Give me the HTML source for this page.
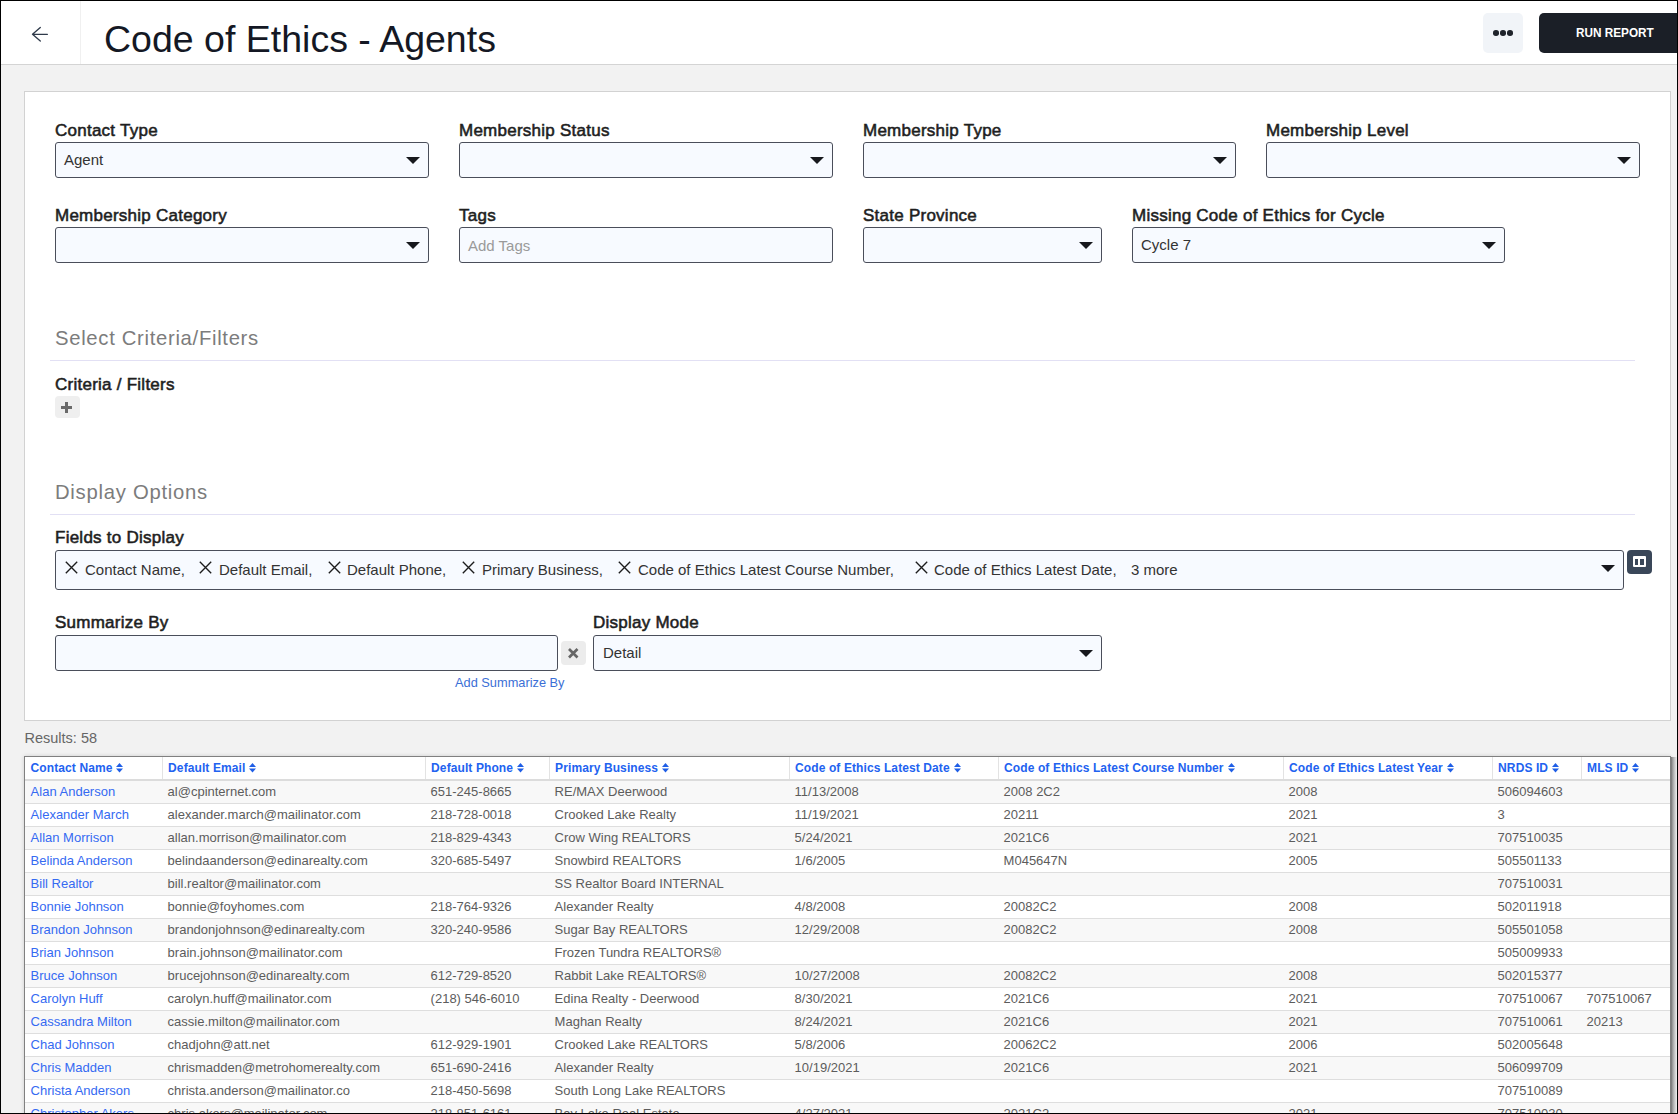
<!DOCTYPE html><html><head><meta charset="utf-8"><style>
*{margin:0;padding:0;box-sizing:border-box}
html,body{width:1678px;height:1114px;overflow:hidden}
body{position:relative;background:#f2f2f2;font-family:"Liberation Sans",sans-serif}
.t{position:absolute;white-space:nowrap}
.abs{position:absolute}
#hdr{position:absolute;left:0;top:0;width:1678px;height:65px;background:#fff;border-bottom:1px solid #d4d4d4}
#backdiv{position:absolute;left:80px;top:0;width:1px;height:64px;background:#f0f0f0}
#dots{position:absolute;left:1483px;top:13px;width:40px;height:40px;background:#f1f4f8;border-radius:5px}
#dots span{position:absolute;top:17.2px;width:5.6px;height:5.6px;border-radius:50%;background:#1f232b}
#dots span:nth-child(1){left:10px}#dots span:nth-child(2){left:17px}#dots span:nth-child(3){left:24px}
#run{position:absolute;left:1539px;top:13px;width:160px;height:40px;background:#1b1f27;border-radius:5px;color:#fff;
 font-weight:700;font-size:13px;line-height:40px;padding-left:37px}
#run span{display:inline-block;transform:scaleX(0.905);transform-origin:0 50%}
#card{position:absolute;left:24px;top:91px;width:1647px;height:630px;background:#fff;border:1px solid #d2d2d2}
.box{position:absolute;background:#f7faff;border:1px solid #4a4e5a;border-radius:3px}
.tri{position:absolute;width:0;height:0;border-left:7px solid transparent;border-right:7px solid transparent;border-top:7px solid #17181d}
.hr{position:absolute;left:50px;width:1585px;height:1px;background:#e2e0f4}
#plus{position:absolute;left:55px;top:396px;width:25px;height:22px;background:#efefef;border-radius:4px}
#plus:before{content:"";position:absolute;left:6px;top:10.2px;width:11px;height:2.6px;background:#6a6a6a}
#plus:after{content:"";position:absolute;left:10.1px;top:5.9px;width:2.7px;height:10.8px;background:#6a6a6a}
#colbtn{position:absolute;left:1627px;top:550px;width:25px;height:24px;background:#3a4759;border-radius:4px}
#colbtn div{position:absolute;left:6px;top:6px;width:13px;height:11px;border:2px solid #fff;border-radius:1px}
#colbtn div:after{content:"";position:absolute;left:3.5px;top:0;width:2px;height:7px;background:#fff}
#xbtn{position:absolute;left:561px;top:641px;width:25px;height:24px;background:#ececec;border-radius:4px;color:#555;font-size:12px;line-height:24px;text-align:center}
#tbl{position:absolute;left:24px;top:756px;width:1647px;height:400px;background:#fff;border:1px solid #808080;border-right-width:1px;box-shadow:0 0 4px rgba(0,0,0,.15)}
#tshadow{position:absolute;left:1671px;top:757px;width:6px;height:400px;background:linear-gradient(to right,#7c7c7c,#a8a8a8 30%,#d0d0d0 70%,#efefef)}
table{border-collapse:collapse;table-layout:fixed;width:1645px}
th{height:23px;text-align:left;font-size:12px;font-weight:700;letter-spacing:0.1px;color:#2262f0;padding:0 0 0 5.6px;border-right:1px solid #e3e3e3;border-bottom:2px solid #dcdcdc;white-space:nowrap;line-height:22px;vertical-align:top}
th:last-child{border-right:none}
.sort{display:inline-block;vertical-align:top;margin:6px 0 0 4px}
td{height:23px;font-size:13px;color:#5c5c5c;padding:0 0 0 5.6px;border-bottom:1px solid #dedede;white-space:nowrap;overflow:hidden;line-height:22px;vertical-align:top}
td.l{color:#356af2}
tbody tr:nth-child(odd) td{background:#f8f8f8}
#frame{position:absolute;left:0;top:0;width:1678px;height:1114px;border:1px solid #000;pointer-events:none}
</style></head><body><div id="hdr"></div>
<div id="backdiv"></div>
<svg class="abs" style="left:30px;top:25px" width="20" height="20" viewBox="30 25 20 20"><path d="M40.3 27.5 L32.5 34.3 L40.3 41.0 M32.8 34.3 H47.4" fill="none" stroke="#2f3a4a" stroke-width="1.3" stroke-linecap="round" stroke-linejoin="round"/></svg>
<div class="t" style="left:104px;top:20.74px;font-size:37.5px;line-height:37.5px;color:#141824;font-weight:400;">Code of Ethics - Agents</div>
<div id="dots"><span></span><span></span><span></span></div>
<div id="run"><span>RUN REPORT</span></div>
<div id="card"></div>
<div class="t" style="left:55px;top:121.60px;font-size:17px;line-height:17px;color:#1e1e1e;font-weight:400;-webkit-text-stroke:0.55px #1e1e1e;letter-spacing:0.25px;">Contact Type</div>
<div class="t" style="left:459px;top:121.60px;font-size:17px;line-height:17px;color:#1e1e1e;font-weight:400;-webkit-text-stroke:0.55px #1e1e1e;letter-spacing:0.25px;">Membership Status</div>
<div class="t" style="left:863px;top:121.60px;font-size:17px;line-height:17px;color:#1e1e1e;font-weight:400;-webkit-text-stroke:0.55px #1e1e1e;letter-spacing:0.25px;">Membership Type</div>
<div class="t" style="left:1266px;top:121.60px;font-size:17px;line-height:17px;color:#1e1e1e;font-weight:400;-webkit-text-stroke:0.55px #1e1e1e;letter-spacing:0.25px;">Membership Level</div>
<div class="box" style="left:55px;top:142px;width:374px;height:36px"></div><div class="tri" style="left:406px;top:157px"></div>
<div class="box" style="left:459px;top:142px;width:374px;height:36px"></div><div class="tri" style="left:810px;top:157px"></div>
<div class="box" style="left:863px;top:142px;width:373px;height:36px"></div><div class="tri" style="left:1213px;top:157px"></div>
<div class="box" style="left:1266px;top:142px;width:374px;height:36px"></div><div class="tri" style="left:1617px;top:157px"></div>
<div class="t" style="left:64px;top:152.29px;font-size:15px;line-height:15px;color:#333;font-weight:400;">Agent</div>
<div class="t" style="left:55px;top:206.60px;font-size:17px;line-height:17px;color:#1e1e1e;font-weight:400;-webkit-text-stroke:0.55px #1e1e1e;letter-spacing:0.25px;">Membership Category</div>
<div class="t" style="left:459px;top:206.60px;font-size:17px;line-height:17px;color:#1e1e1e;font-weight:400;-webkit-text-stroke:0.55px #1e1e1e;letter-spacing:0.25px;">Tags</div>
<div class="t" style="left:863px;top:206.60px;font-size:17px;line-height:17px;color:#1e1e1e;font-weight:400;-webkit-text-stroke:0.55px #1e1e1e;letter-spacing:0.25px;">State Province</div>
<div class="t" style="left:1132px;top:206.60px;font-size:17px;line-height:17px;color:#1e1e1e;font-weight:400;-webkit-text-stroke:0.55px #1e1e1e;letter-spacing:0.25px;">Missing Code of Ethics for Cycle</div>
<div class="box" style="left:55px;top:227px;width:374px;height:36px"></div><div class="tri" style="left:406px;top:242px"></div>
<div class="box" style="left:459px;top:227px;width:374px;height:36px"></div>
<div class="box" style="left:863px;top:227px;width:239px;height:36px"></div><div class="tri" style="left:1079px;top:242px"></div>
<div class="box" style="left:1132px;top:227px;width:373px;height:36px"></div><div class="tri" style="left:1482px;top:242px"></div>
<div class="t" style="left:468px;top:237.79px;font-size:15px;line-height:15px;color:#9a9a9a;font-weight:400;">Add Tags</div>
<div class="t" style="left:1141px;top:237.29px;font-size:15px;line-height:15px;color:#333;font-weight:400;">Cycle 7</div>
<div class="t" style="left:55px;top:327.81px;font-size:20.3px;line-height:20.3px;color:#7c7c7c;font-weight:400;letter-spacing:0.68px;">Select Criteria/Filters</div>
<div class="hr" style="top:360px"></div>
<div class="t" style="left:55px;top:375.60px;font-size:17px;line-height:17px;color:#1e1e1e;font-weight:400;-webkit-text-stroke:0.55px #1e1e1e;letter-spacing:0.25px;">Criteria / Filters</div>
<div id="plus"></div>
<div class="t" style="left:55px;top:481.81px;font-size:20.3px;line-height:20.3px;color:#7c7c7c;font-weight:400;letter-spacing:0.72px;">Display Options</div>
<div class="hr" style="top:514px"></div>
<div class="t" style="left:55px;top:529.30px;font-size:17px;line-height:17px;color:#1e1e1e;font-weight:400;-webkit-text-stroke:0.55px #1e1e1e;letter-spacing:0.25px;">Fields to Display</div>
<div class="box" style="left:55px;top:550px;width:1569px;height:40px"></div><div class="tri" style="left:1601px;top:565px"></div>
<svg class="abs" style="left:65px;top:561px" width="13" height="13" viewBox="0 0 13 13"><path d="M0.8 0.8 L12.2 12.2 M12.2 0.8 L0.8 12.2" stroke="#1c1c1c" stroke-width="1.35"/></svg>
<div class="t" style="left:85px;top:562.29px;font-size:15px;line-height:15px;color:#333;font-weight:400;">Contact Name,</div>
<svg class="abs" style="left:199px;top:561px" width="13" height="13" viewBox="0 0 13 13"><path d="M0.8 0.8 L12.2 12.2 M12.2 0.8 L0.8 12.2" stroke="#1c1c1c" stroke-width="1.35"/></svg>
<div class="t" style="left:219px;top:562.29px;font-size:15px;line-height:15px;color:#333;font-weight:400;">Default Email,</div>
<svg class="abs" style="left:328px;top:561px" width="13" height="13" viewBox="0 0 13 13"><path d="M0.8 0.8 L12.2 12.2 M12.2 0.8 L0.8 12.2" stroke="#1c1c1c" stroke-width="1.35"/></svg>
<div class="t" style="left:347px;top:562.29px;font-size:15px;line-height:15px;color:#333;font-weight:400;">Default Phone,</div>
<svg class="abs" style="left:462px;top:561px" width="13" height="13" viewBox="0 0 13 13"><path d="M0.8 0.8 L12.2 12.2 M12.2 0.8 L0.8 12.2" stroke="#1c1c1c" stroke-width="1.35"/></svg>
<div class="t" style="left:482px;top:562.29px;font-size:15px;line-height:15px;color:#333;font-weight:400;">Primary Business,</div>
<svg class="abs" style="left:618px;top:561px" width="13" height="13" viewBox="0 0 13 13"><path d="M0.8 0.8 L12.2 12.2 M12.2 0.8 L0.8 12.2" stroke="#1c1c1c" stroke-width="1.35"/></svg>
<div class="t" style="left:638px;top:562.29px;font-size:15px;line-height:15px;color:#333;font-weight:400;">Code of Ethics Latest Course Number,</div>
<svg class="abs" style="left:915px;top:561px" width="13" height="13" viewBox="0 0 13 13"><path d="M0.8 0.8 L12.2 12.2 M12.2 0.8 L0.8 12.2" stroke="#1c1c1c" stroke-width="1.35"/></svg>
<div class="t" style="left:934px;top:562.29px;font-size:15px;line-height:15px;color:#333;font-weight:400;">Code of Ethics Latest Date,</div>
<div class="t" style="left:1131px;top:562.29px;font-size:15px;line-height:15px;color:#333;font-weight:400;">3 more</div>
<div id="colbtn"></div><svg class="abs" style="left:1633px;top:556px" width="13" height="11" viewBox="0 0 13 11"><rect x="0" y="0" width="13" height="11" rx="1" fill="#fff"/><rect x="2" y="3" width="3" height="6" fill="#3a4759"/><rect x="7" y="3" width="4" height="6" fill="#3a4759"/></svg>
<div class="t" style="left:55px;top:614.30px;font-size:17px;line-height:17px;color:#1e1e1e;font-weight:400;-webkit-text-stroke:0.55px #1e1e1e;letter-spacing:0.25px;">Summarize By</div>
<div class="box" style="left:55px;top:635px;width:503px;height:36px"></div>
<div id="xbtn"></div><svg class="abs" style="left:566px;top:646px" width="14" height="14" viewBox="0 0 14 14"><path d="M3 3 L11.5 11.5 M11.5 3 L3 11.5" stroke="#666" stroke-width="2.7"/></svg>
<div class="t" style="left:455px;top:677.16px;font-size:12.8px;line-height:12.8px;color:#3b6fd6;font-weight:400;">Add Summarize By</div>
<div class="t" style="left:593px;top:614.30px;font-size:17px;line-height:17px;color:#1e1e1e;font-weight:400;-webkit-text-stroke:0.55px #1e1e1e;letter-spacing:0.25px;">Display Mode</div>
<div class="box" style="left:593px;top:635px;width:509px;height:36px"></div><div class="tri" style="left:1079px;top:650px"></div>
<div class="t" style="left:603px;top:645.29px;font-size:15px;line-height:15px;color:#333;font-weight:400;">Detail</div>
<div class="t" style="left:24.5px;top:731.22px;font-size:14.5px;line-height:14.5px;color:#666;font-weight:400;">Results: 58</div>
<div id="tshadow"></div><div id="tbl"><table><colgroup><col style="width:137px"><col style="width:263px"><col style="width:124px"><col style="width:240px"><col style="width:209px"><col style="width:285px"><col style="width:209px"><col style="width:89px"><col style="width:89px"></colgroup><thead><tr><th>Contact Name<svg class="sort" width="7" height="10" viewBox="0 0 7 10"><path d="M3.5 0 L7 4 H0 Z M0 5.4 H7 L3.5 9.4 Z" fill="#1f5ee6"/></svg></th><th>Default Email<svg class="sort" width="7" height="10" viewBox="0 0 7 10"><path d="M3.5 0 L7 4 H0 Z M0 5.4 H7 L3.5 9.4 Z" fill="#1f5ee6"/></svg></th><th>Default Phone<svg class="sort" width="7" height="10" viewBox="0 0 7 10"><path d="M3.5 0 L7 4 H0 Z M0 5.4 H7 L3.5 9.4 Z" fill="#1f5ee6"/></svg></th><th>Primary Business<svg class="sort" width="7" height="10" viewBox="0 0 7 10"><path d="M3.5 0 L7 4 H0 Z M0 5.4 H7 L3.5 9.4 Z" fill="#1f5ee6"/></svg></th><th>Code of Ethics Latest Date<svg class="sort" width="7" height="10" viewBox="0 0 7 10"><path d="M3.5 0 L7 4 H0 Z M0 5.4 H7 L3.5 9.4 Z" fill="#1f5ee6"/></svg></th><th>Code of Ethics Latest Course Number<svg class="sort" width="7" height="10" viewBox="0 0 7 10"><path d="M3.5 0 L7 4 H0 Z M0 5.4 H7 L3.5 9.4 Z" fill="#1f5ee6"/></svg></th><th>Code of Ethics Latest Year<svg class="sort" width="7" height="10" viewBox="0 0 7 10"><path d="M3.5 0 L7 4 H0 Z M0 5.4 H7 L3.5 9.4 Z" fill="#1f5ee6"/></svg></th><th>NRDS ID<svg class="sort" width="7" height="10" viewBox="0 0 7 10"><path d="M3.5 0 L7 4 H0 Z M0 5.4 H7 L3.5 9.4 Z" fill="#1f5ee6"/></svg></th><th>MLS ID<svg class="sort" width="7" height="10" viewBox="0 0 7 10"><path d="M3.5 0 L7 4 H0 Z M0 5.4 H7 L3.5 9.4 Z" fill="#1f5ee6"/></svg></th></tr></thead><tbody><tr><td class=l>Alan Anderson</td><td>al@cpinternet.com</td><td>651-245-8665</td><td>RE/MAX Deerwood</td><td>11/13/2008</td><td>2008 2C2</td><td>2008</td><td>506094603</td><td></td></tr><tr><td class=l>Alexander March</td><td>alexander.march@mailinator.com</td><td>218-728-0018</td><td>Crooked Lake Realty</td><td>11/19/2021</td><td>20211</td><td>2021</td><td>3</td><td></td></tr><tr><td class=l>Allan Morrison</td><td>allan.morrison@mailinator.com</td><td>218-829-4343</td><td>Crow Wing REALTORS</td><td>5/24/2021</td><td>2021C6</td><td>2021</td><td>707510035</td><td></td></tr><tr><td class=l>Belinda Anderson</td><td>belindaanderson@edinarealty.com</td><td>320-685-5497</td><td>Snowbird REALTORS</td><td>1/6/2005</td><td>M045647N</td><td>2005</td><td>505501133</td><td></td></tr><tr><td class=l>Bill Realtor</td><td>bill.realtor@mailinator.com</td><td></td><td>SS Realtor Board INTERNAL</td><td></td><td></td><td></td><td>707510031</td><td></td></tr><tr><td class=l>Bonnie Johnson</td><td>bonnie@foyhomes.com</td><td>218-764-9326</td><td>Alexander Realty</td><td>4/8/2008</td><td>20082C2</td><td>2008</td><td>502011918</td><td></td></tr><tr><td class=l>Brandon Johnson</td><td>brandonjohnson@edinarealty.com</td><td>320-240-9586</td><td>Sugar Bay REALTORS</td><td>12/29/2008</td><td>20082C2</td><td>2008</td><td>505501058</td><td></td></tr><tr><td class=l>Brian Johnson</td><td>brain.johnson@mailinator.com</td><td></td><td>Frozen Tundra REALTORS&reg;</td><td></td><td></td><td></td><td>505009933</td><td></td></tr><tr><td class=l>Bruce Johnson</td><td>brucejohnson@edinarealty.com</td><td>612-729-8520</td><td>Rabbit Lake REALTORS&reg;</td><td>10/27/2008</td><td>20082C2</td><td>2008</td><td>502015377</td><td></td></tr><tr><td class=l>Carolyn Huff</td><td>carolyn.huff@mailinator.com</td><td>(218) 546-6010</td><td>Edina Realty - Deerwood</td><td>8/30/2021</td><td>2021C6</td><td>2021</td><td>707510067</td><td>707510067</td></tr><tr><td class=l>Cassandra Milton</td><td>cassie.milton@mailinator.com</td><td></td><td>Maghan Realty</td><td>8/24/2021</td><td>2021C6</td><td>2021</td><td>707510061</td><td>20213</td></tr><tr><td class=l>Chad Johnson</td><td>chadjohn@att.net</td><td>612-929-1901</td><td>Crooked Lake REALTORS</td><td>5/8/2006</td><td>20062C2</td><td>2006</td><td>502005648</td><td></td></tr><tr><td class=l>Chris Madden</td><td>chrismadden@metrohomerealty.com</td><td>651-690-2416</td><td>Alexander Realty</td><td>10/19/2021</td><td>2021C6</td><td>2021</td><td>506099709</td><td></td></tr><tr><td class=l>Christa Anderson</td><td>christa.anderson@mailinator.co</td><td>218-450-5698</td><td>South Long Lake REALTORS</td><td></td><td></td><td></td><td>707510089</td><td></td></tr><tr><td class=l>Christopher Akers</td><td>chris.akers@mailinator.com</td><td>218-851-6161</td><td>Bay Lake Real Estate</td><td>4/27/2021</td><td>2021C2</td><td>2021</td><td>707510030</td><td></td></tr></tbody></table></div><div id="frame"></div></body></html>
